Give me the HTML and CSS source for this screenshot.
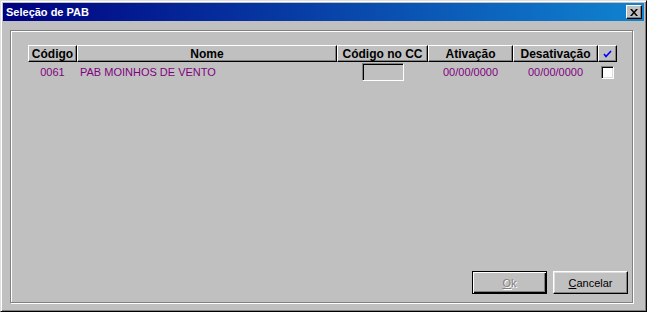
FILE: index.html
```html
<!DOCTYPE html>
<html lang="pt">
<head>
    <meta charset="UTF-8">
    <title>Seleção de PAB</title>
    <link rel="stylesheet" href="styles.css">
</head>
<body>
    <div class="window">
        <div class="titlebar">
            <span class="title">Seleção de PAB</span>
            <button class="close-btn" type="button">
                <svg width="8" height="7" viewBox="0 0 8 7">
                    <path d="M0 0h2l2 2.5L6 0h2L5 3.5 8 7H6L4 4.5 2 7H0l3-3.5z" fill="#000"/>
                </svg>
            </button>
        </div>

        <div class="client">
            <div class="panel">
                <table class="grid">
                    <thead>
                        <tr>
                            <th class="col-cod">Código</th>
                            <th class="col-nome">Nome</th>
                            <th class="col-cc">Código no CC</th>
                            <th class="col-date">Ativação</th>
                            <th class="col-date">Desativação</th>
                            <th class="col-chk">
                                <svg width="9" height="8" viewBox="0 0 9 8">
                                    <path d="M1 4l2 2.5L8 1" fill="none" stroke="#0000ff" stroke-width="1.6"/>
                                </svg>
                            </th>
                        </tr>
                    </thead>
                    <tbody>
                        <tr>
                            <td class="center">0061</td>
                            <td>PAB MOINHOS DE VENTO</td>
                            <td class="center"><span class="cc-box"></span></td>
                            <td class="center">00/00/0000</td>
                            <td class="center">00/00/0000</td>
                            <td class="center"><span class="check"></span></td>
                        </tr>
                    </tbody>
                </table>

                <div class="actions">
                    <button class="btn default" type="button" disabled><u>O</u>k</button>
                    <button class="btn" type="button"><u>C</u>ancelar</button>
                </div>
            </div>
        </div>
    </div>
</body>
</html>
```

FILE: styles.css
```css
body {
    margin: 0;
    background-color: #c0c0c0;
    font-family: "Liberation Sans", Arial, sans-serif;
    font-size: 11px;
}

.window {
    box-sizing: border-box;
    width: 647px;
    height: 312px;
    padding: 2px;
    background-color: #c0c0c0;
    border: 1px solid;
    border-color: #dfdfdf #000 #000 #dfdfdf;
    box-shadow: inset 1px 1px #fff, inset -1px -1px #808080;
    display: flex;
    flex-direction: column;
}

.titlebar {
    height: 18px;
    display: flex;
    align-items: center;
    justify-content: space-between;
    padding: 0 2px 0 3px;
    background: linear-gradient(to right, #000080, #1084d0);
}

.title {
    color: #fff;
    font-weight: bold;
    font-size: 11px;
}

.close-btn {
    width: 16px;
    height: 14px;
    padding: 0;
    display: flex;
    align-items: center;
    justify-content: center;
    background-color: #c0c0c0;
    border: 1px solid;
    border-color: #fff #000 #000 #fff;
    box-shadow: inset -1px -1px #808080;
}

.client {
    flex: 1;
    padding: 9px 0 0 7px;
}

.panel {
    box-sizing: border-box;
    width: 623px;
    height: 273px;
    border: 1px solid #808080;
    box-shadow: inset 1px 1px #fff, 1px 1px 0 #fff;
    padding: 14px 4px 8px 17px;
    display: flex;
    flex-direction: column;
    justify-content: space-between;
}

.grid {
    border-collapse: separate;
    border-spacing: 0;
    table-layout: fixed;
    width: 589px;
}

.grid th {
    box-sizing: border-box;
    height: 17px;
    padding: 0;
    font-weight: bold;
    font-size: 12px;
    color: #000;
    background-color: #c0c0c0;
    border: 1px solid;
    border-color: #fff #000 #000 #fff;
    box-shadow: inset -1px -1px #808080;
    white-space: nowrap;
}

.col-cod { width: 49px; }
.col-nome { width: 260px; }
.col-cc { width: 91px; }
.col-date { width: 85px; }
.col-chk { width: 19px; }

.col-chk svg {
    display: block;
    margin: 0 auto;
}

.grid td {
    height: 20px;
    padding: 0 0 0 3px;
    color: #800080;
    white-space: nowrap;
}

.grid td.center {
    padding: 0;
    text-align: center;
}

.cc-box {
    display: inline-block;
    vertical-align: middle;
    box-sizing: border-box;
    width: 42px;
    height: 18px;
    border: 1px solid;
    border-color: #808080 #fff #fff #808080;
    box-shadow: inset 1px 1px #000;
}

.check {
    display: inline-block;
    vertical-align: middle;
    box-sizing: border-box;
    width: 13px;
    height: 13px;
    background-color: #fff;
    border: 1px solid;
    border-color: #808080 #fff #fff #808080;
    box-shadow: inset 1px 1px #000, inset -1px -1px #dfdfdf;
}

.actions {
    display: flex;
    justify-content: flex-end;
    gap: 6px;
}

.btn {
    box-sizing: border-box;
    width: 75px;
    height: 23px;
    padding: 0;
    font-family: "Liberation Sans", Arial, sans-serif;
    font-size: 11px;
    color: #000;
    background-color: #c0c0c0;
    border: 1px solid;
    border-color: #fff #000 #000 #fff;
    box-shadow: inset -1px -1px #808080, inset 1px 1px #dfdfdf;
}

.btn.default {
    border: 1px solid #000;
    box-shadow: inset 1px 1px #fff, inset -1px -1px #000, inset -2px -2px #808080;
}

.btn:disabled {
    color: #808080;
    text-shadow: 1px 1px #fff;
}
```
